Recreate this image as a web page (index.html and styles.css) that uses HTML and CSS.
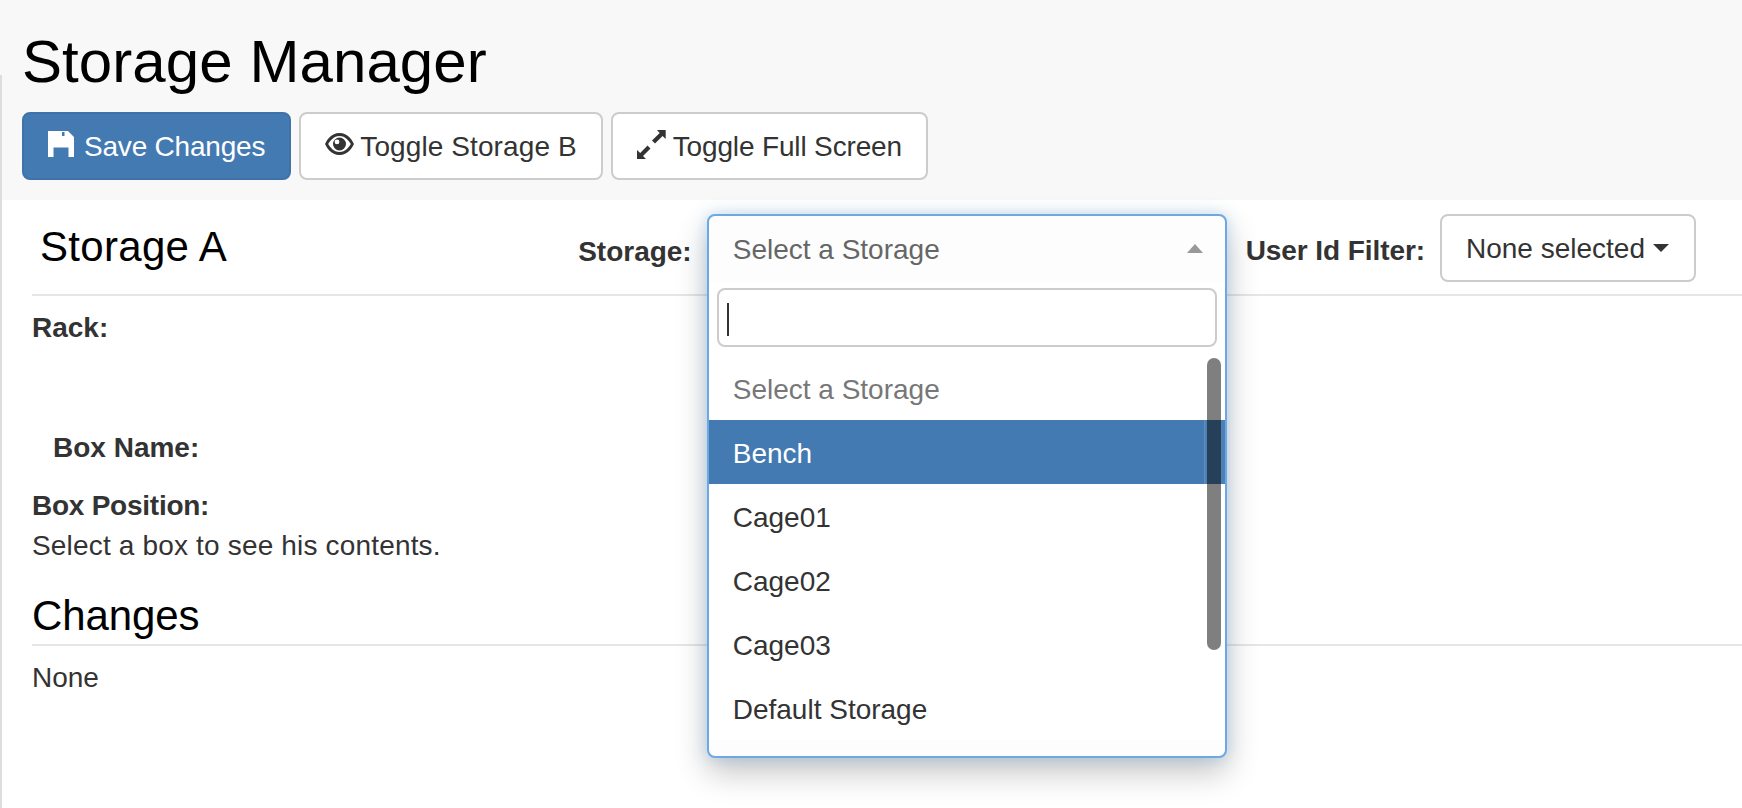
FILE: index.html
```html
<!DOCTYPE html>
<html lang="en">
<head>
<meta charset="utf-8">
<title>Storage Manager</title>
<link rel="stylesheet" href="styles.css">
</head>
<body>
<header class="top">
  <h1 class="page-title">Storage Manager</h1>
  <div class="toolbar">
    <button class="btn btn-primary"><svg class="ico" viewBox="0 0 26 26"><path fill="currentColor" fill-rule="evenodd" d="M0 0H20L26 6V26H20.500V16.500H5.500V26H0ZM14 1H16.500V5H14Z"/></svg><span class="txt-save">Save Changes</span></button>
    <button class="btn"><svg class="ico ico-eye" viewBox="0 0 29 22"><path fill="currentColor" fill-rule="evenodd" d="M14.500 0C23 0 27 7 29 11C27 15 23 22 14.500 22C6 22 2 15 0 11C2 7 6 0 14.500 0ZM14.500 3C8.500 3 5 8 3.200 11C5 14 8.500 19 14.500 19C20.500 19 24 14 25.800 11C24 8 20.500 3 14.500 3ZM14.500 4.500A6.500 6.500 0 1 1 14.500 17.500A6.500 6.500 0 1 1 14.500 4.500ZM12 6.500A2.400 2.400 0 1 0 12 11.300A2.400 2.400 0 1 0 12 6.500Z"/></svg><span class="txt-toggle">Toggle Storage B</span></button>
    <button class="btn"><svg class="ico ico-resize" viewBox="0 0 29 30"><path fill="currentColor" d="M20 1H28.700V10L25.600 7L18 14.500L15 11.500L22.700 4ZM0 30V21L3.200 24L10.500 16.500L13.500 19.500L6 27L9 30Z"/></svg><span class="txt-full">Toggle Full Screen</span></button>
  </div>
</header>
<main class="content">
  <section class="storage-head">
    <h2 class="storage-title">Storage A</h2>
    <div class="filters">
      <label class="lbl lbl-storage">Storage:</label>
      <div class="select">
        <div class="select-drop">
          <div class="search-wrap"><div class="search"><i class="text-caret"></i></div></div>
          <ul class="options">
            <li class="opt opt-placeholder">Select a Storage</li>
            <li class="opt opt-active">Bench</li>
            <li class="opt">Cage01</li>
            <li class="opt">Cage02</li>
            <li class="opt">Cage03</li>
            <li class="opt">Default Storage</li>
          </ul>
          <div class="scroll-track"></div>
          <div class="scroll-thumb"></div>
        </div>
        <div class="select-current">
          <span>Select a Storage</span>
          <i class="arrow-up"></i>
        </div>
      </div>
      <label class="lbl lbl-user">User Id Filter:</label>
      <button class="btn btn-filter"><span>None selected</span><i class="arrow-down"></i></button>
    </div>
  </section>
  <section class="details">
    <div class="lbl rack">Rack:</div>
    <div class="lbl box-name">Box Name:</div>
    <div class="lbl box-pos">Box Position:</div>
    <p class="hint">Select a box to see his contents.</p>
    <h2 class="changes-title">Changes</h2>
    <p class="none">None</p>
  </section>
</main>
</body>
</html>
```
FILE: styles.css
```css
* { box-sizing: border-box; }
html, body { margin: 0; height: 100%; }
body {
  position: relative;
  background: #fff;
  color: #333;
  font-family: "Liberation Sans", Arial, sans-serif;
  font-size: 28px;
  line-height: 40px;
  overflow: hidden;
}
body::before {
  content: "";
  position: absolute;
  left: 0; top: 75px; bottom: 0;
  width: 2px;
  background: #ddd;
}
.top {
  height: 200px;
  background: #f8f8f8;
  padding: 20px 0 0 22px;
}
.page-title {
  margin: 0;
  color: #000;
  font-weight: 400;
  font-size: 60px;
  line-height: 84px;
  height: 92px;
  letter-spacing: .08px;
}
.toolbar { display: flex; gap: 8px; }
.btn {
  display: inline-flex;
  align-items: center;
  height: 68px;
  padding: 2px 24px 0;
  font: inherit;
  color: #333;
  background: #fff;
  border: 2px solid #ccc;
  border-radius: 8px;
  white-space: nowrap;
}
.btn-primary { color: #fff; background: #447ab2; border-color: #3f72a8; }
.txt-save { letter-spacing: -.2px; }
.txt-toggle { letter-spacing: .1px; }
.txt-full { letter-spacing: -.15px; }
.ico { width: 26px; height: 26px; margin: 0 10px 6px 0; flex: none; }
.ico-eye { width: 29px; height: 22px; margin-right: 6px; }
.ico-resize { width: 29px; height: 30px; margin-right: 7px; }
.content { padding: 0 0 0 32px; }
.storage-head {
  display: flex;
  justify-content: space-between;
  height: 96px;
  border-bottom: 2px solid #e6e6e6;
  padding: 14px 46px 0 8px;
}
.storage-title {
  margin: 0;
  color: #000;
  font-weight: 400;
  font-size: 42px;
  line-height: 66px;
  letter-spacing: .3px;
}
.filters { display: flex; align-items: flex-start; }
.lbl { font-weight: 700; white-space: nowrap; }
.lbl-storage { margin-top: 18px; margin-right: 15px; }
.lbl-user { margin-top: 17px; margin-left: 19px; margin-right: 15px; letter-spacing: -.08px; }
.select { position: relative; width: 520px; height: 68px; }
.select-current {
  position: relative;
  display: flex;
  align-items: center;
  justify-content: space-between;
  height: 68px;
  padding: 4px 24px 0 26px;
  color: #666;
}
.arrow-up {
  width: 0; height: 0;
  margin-bottom: 4px;
  border-left: 8px solid transparent;
  border-right: 8px solid transparent;
  border-bottom: 9px solid #999;
}
.select-drop {
  position: absolute;
  left: 0; top: 0;
  width: 520px;
  height: 544px;
  padding-top: 66px;
  background: #fdfdfd;
  border: 2px solid #6ea8e4;
  border-radius: 8px;
  box-shadow: 0 0 14px rgba(102, 175, 233, .35), 0 14px 32px rgba(0, 0, 0, .24);
  overflow: hidden;
}
.search-wrap { padding: 6px 8px 9px; background: #fff; }
.search {
  height: 59px;
  padding: 13px 8px;
  background: #fff;
  border: 2px solid #ccc;
  border-radius: 8px;
}
.text-caret { display: block; width: 2px; height: 33px; background: #333; }
.options { margin: 0; padding: 0; list-style: none; background: #fff; }
.opt { height: 64px; line-height: 67px; padding-left: 24px; }
.opt-placeholder { color: #777; }
.opt-active { color: #fff; background: #447ab2; }
.scroll-track {
  position: absolute;
  right: 0; top: 142px; bottom: 0;
  width: 21px;
  background: rgba(255, 255, 255, .05);
  border-left: 1px solid rgba(255, 255, 255, .12);
}
.scroll-thumb {
  position: absolute;
  right: 4px; top: 142px;
  width: 14px; height: 292px;
  background: rgba(0, 0, 0, .5);
  border-radius: 7px;
}
.btn-filter { width: 256px; padding-top: 0; }
.btn-filter span { padding-top: 1px; margin-bottom: -1px; }
.arrow-down {
  margin-left: 8px;
  width: 0; height: 0;
  border-left: 8px solid transparent;
  border-right: 8px solid transparent;
  border-top: 8px solid #333;
}
.details { padding-top: 12px; }
.rack { height: 120px; }
.box-name { height: 58px; padding-left: 21px; }
.box-pos { height: 40px; letter-spacing: -.25px; }
.hint { margin: 0; height: 40px; letter-spacing: .17px; }
.changes-title {
  margin: 0;
  padding-top: 22px;
  height: 80px;
  color: #000;
  font-weight: 400;
  font-size: 42px;
  line-height: 56px;
  letter-spacing: -.1px;
  border-bottom: 2px solid #e6e6e6;
}
.none { margin: 12px 0 0; }
```
